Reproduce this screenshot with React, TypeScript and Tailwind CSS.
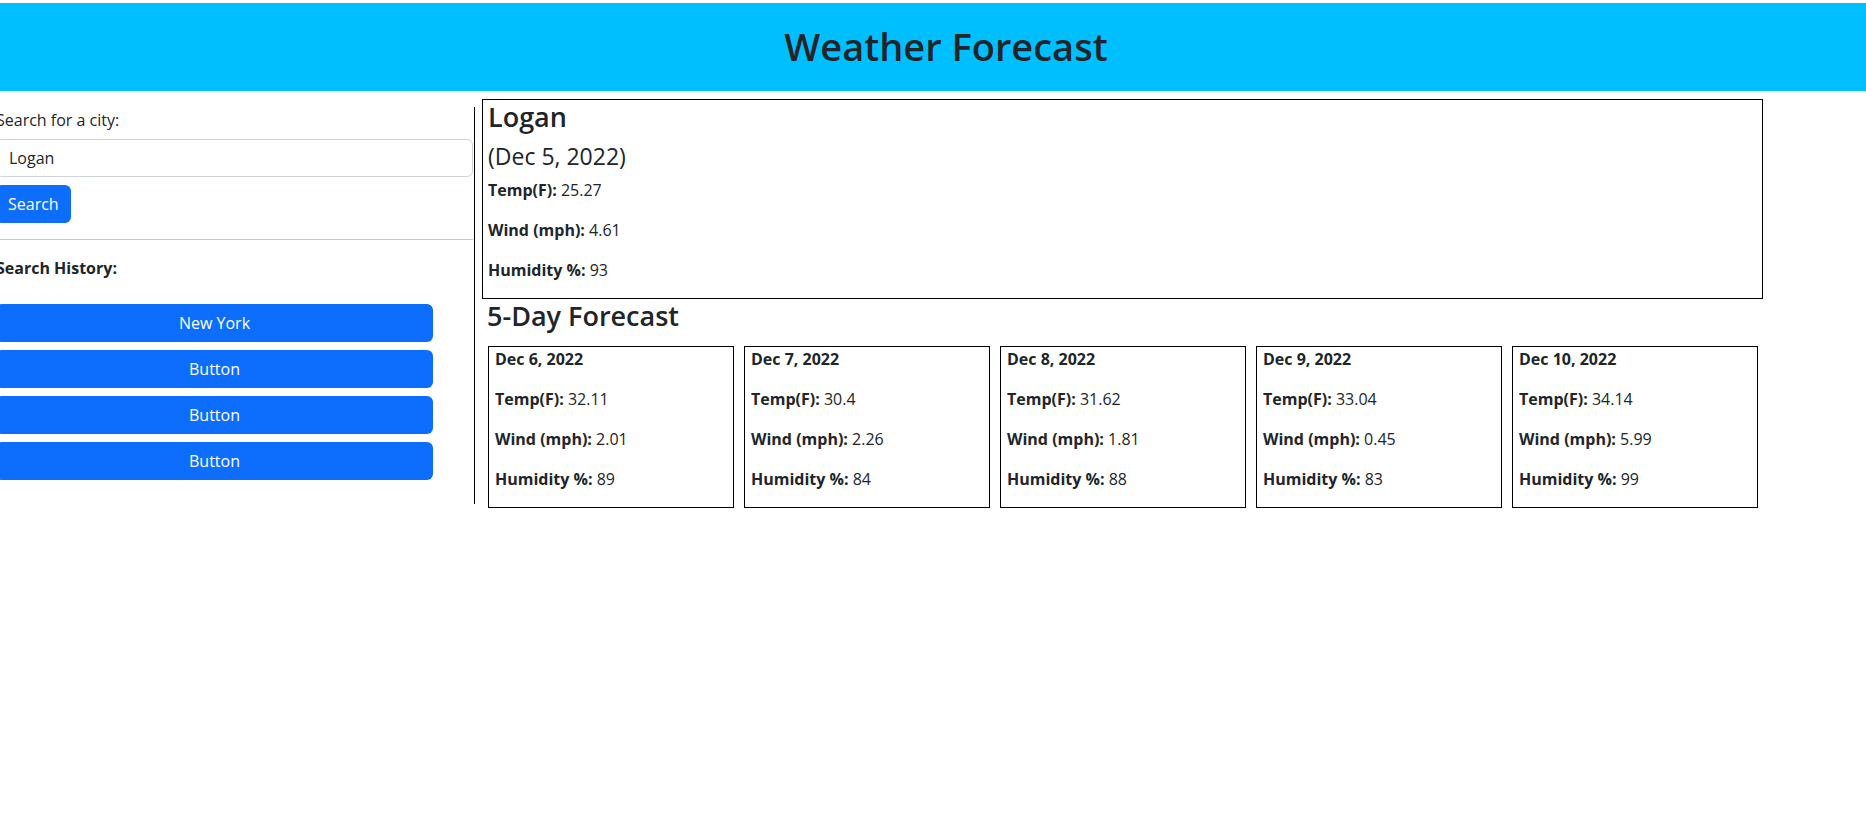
const font = "font-['Open_Sans',sans-serif]";

type Day = { date: string; temp: string; wind: string; humidity: string };

const forecast: Day[] = [
  { date: "Dec 6, 2022", temp: "32.11", wind: "2.01", humidity: "89" },
  { date: "Dec 7, 2022", temp: "30.4", wind: "2.26", humidity: "84" },
  { date: "Dec 8, 2022", temp: "31.62", wind: "1.81", humidity: "88" },
  { date: "Dec 9, 2022", temp: "33.04", wind: "0.45", humidity: "83" },
  { date: "Dec 10, 2022", temp: "34.14", wind: "5.99", humidity: "99" },
];

const history = ["New York", "Button", "Button", "Button"];

function Stat({ label, value }: { label: string; value: string }) {
  return (
    <p className="mb-4 leading-6">
      <span className="font-bold">{label}</span> {value}
    </p>
  );
}

export default function App() {
  return (
    <div className={`min-h-screen overflow-hidden bg-white text-base text-[#212529] ${font}`}>
      <header className="mt-[3px] flex h-[88px] items-center justify-center bg-[#00bfff] pl-[26px]">
        <h1 className="text-[38px] font-semibold leading-[1.2]">Weather Forecast</h1>
      </header>

      <div className="flex items-start">
        <aside className="ml-[-4px] mt-4 w-[479px] shrink-0 border-r border-black pb-6 pr-px pt-px">
          <label className="mb-[7px] block leading-6">Search for a city:</label>
          <input
            defaultValue="Logan"
            className="block h-[38px] w-full rounded-md border border-[#ced4da] px-3 leading-6 outline-none"
          />
          <button className="mt-2 h-[38px] rounded-md bg-[#0d6efd] px-3 leading-6 text-white">Search</button>
          <hr className="mt-4 border-t border-[#c8c9ca]" />
          <p className="mt-4 font-bold leading-6">Search History:</p>
          <div className="mt-6 flex w-[437px] flex-col gap-2">
            {history.map((name, i) => (
              <button key={i} className="h-[38px] rounded-md bg-[#0d6efd] leading-6 text-white">
                {name}
              </button>
            ))}
          </div>
        </aside>

        <section className="ml-[7px] mt-2 w-[1281px]">
          <div className="border border-black pl-[5px]">
            <h3 className="mb-2 text-[27px] font-semibold leading-[1.245]">Logan</h3>
            <h4 className="mb-2 text-[23px] font-medium leading-[1.25]">(Dec 5, 2022)</h4>
            <Stat label="Temp(F):" value="25.27" />
            <Stat label="Wind (mph):" value="4.61" />
            <Stat label="Humidity %:" value="93" />
          </div>
          <h3 className="mb-[13px] pl-[5px] text-[27px] font-semibold leading-[1.245]">5-Day Forecast</h3>
          <div className="ml-[6px] flex gap-[10px]">
            {forecast.map((d) => (
              <div key={d.date} className="w-[246px] border border-black pl-[6px]">
                <p className="mb-4 font-bold leading-6">{d.date}</p>
                <Stat label="Temp(F):" value={d.temp} />
                <Stat label="Wind (mph):" value={d.wind} />
                <Stat label="Humidity %:" value={d.humidity} />
              </div>
            ))}
          </div>
        </section>
      </div>
    </div>
  );
}
